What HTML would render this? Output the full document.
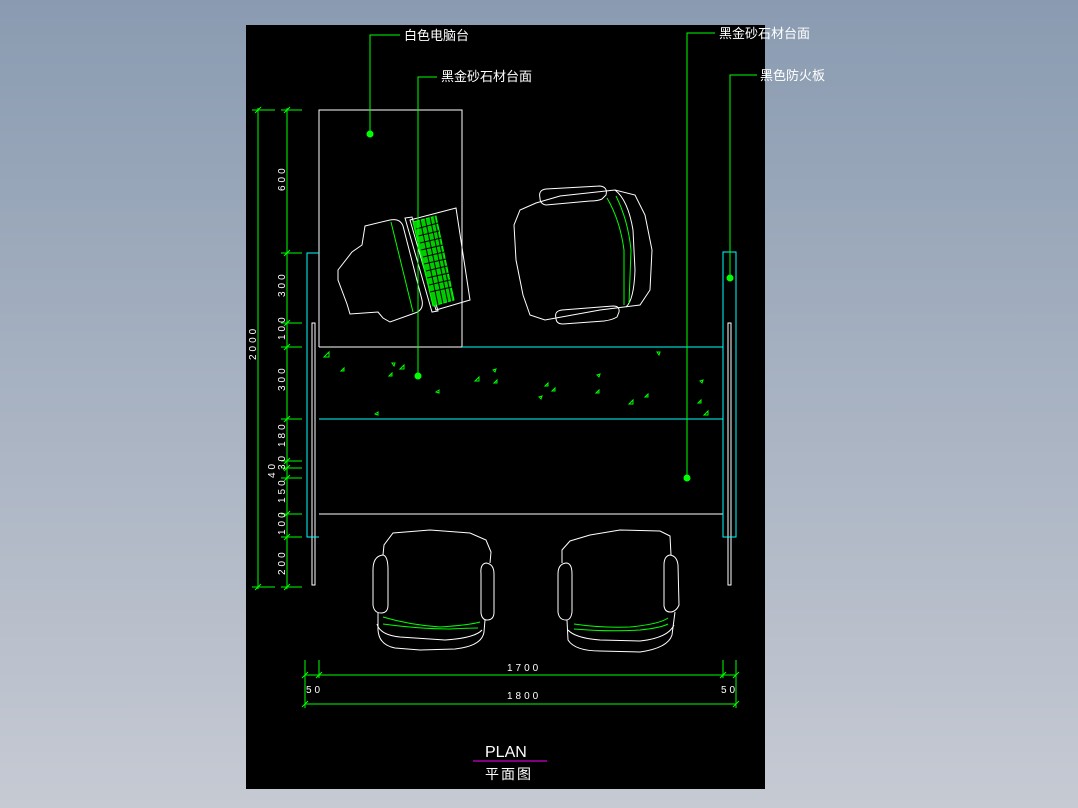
<!DOCTYPE html>
<html><head><meta charset="utf-8"><style>
html,body{margin:0;padding:0;width:1078px;height:808px;overflow:hidden;background:linear-gradient(#8a9bb1,#c6cad3);}
svg{position:absolute;left:0;top:0}
text{font-family:"Liberation Sans","Noto Sans CJK SC",sans-serif;}
</style></head><body>
<svg width="1078" height="808" viewBox="0 0 1078 808">
<rect x="246" y="25" width="519" height="764" fill="#000"/>
<g fill="none" stroke="#fff" stroke-width="1" shape-rendering="crispEdges">
<path d="M319 347V110H462V347"/>
<path d="M319 347H462"/>
<path d="M319 514H723"/>
<rect x="312" y="323" width="3" height="262"/>
<rect x="728" y="323" width="3" height="262"/>
</g>
<g fill="none" stroke="#fff" stroke-width="1">
<!-- monitor -->
<path d="M365 226L390 220Q400 218 403 226L422 300Q424 310 415 313L390 322L383 318L378 312L350 314L347 304L338 280L338 270L352 252L362 245Z"/>
<path d="M405 218L432 312L438 311L412 217Z"/>
<path d="M410 220L456 208L470 300L436 310Z"/>
<!-- top right chair -->
<path d="M536 203L520 210L514 225L516 260L523 295L530 315L545 320L600 310L640 305L650 290L652 250L645 215L635 195L615 190L560 196Z"/>
<path d="M540 198Q538 190 546 189L600 186Q608 187 606 195L602 199Q598 201 590 201L546 205Q540 204 540 198Z"/>
<path d="M556 318Q554 311 562 310L613 306Q620 306 619 312L617 317Q612 320 604 321L563 324Q556 324 556 318Z"/>
<path d="M615 190Q628 200 633 230L635 270Q634 300 626 307"/>
<!-- bottom left chair -->
<path d="M383 555L384 545L393 533L430 530L470 533L486 540L491 552L490 563"/>
<path d="M383 555Q373 556 373 570L373 605Q374 613 381 613Q388 613 388 605L388 570Q388 556 383 555Z"/>
<path d="M486 563Q480 564 481 574L481 613Q482 620 487 620Q494 620 494 612L494 574Q494 564 486 563Z"/>
<path d="M378 613L378 630Q379 645 395 648L420 650L455 649Q482 646 484 632L485 620"/>
<path d="M377 624Q380 635 400 637L445 640Q475 638 482 630"/>
<!-- bottom right chair -->
<path d="M562 563L562 550L570 541L590 535L620 530L660 531L670 536L671 555"/>
<path d="M566 563Q558 564 558 574L558 612Q559 620 566 620Q571 620 572 612L572 574Q572 563 566 563Z"/>
<path d="M670 555Q664 556 664 565L664 606Q665 612 670 612Q676 612 679 605L678 565Q677 556 670 555Z"/>
<path d="M567 620L568 640Q575 651 600 651L640 652Q668 648 672 635L675 612"/>
<path d="M568 630Q575 638 600 640L640 641Q668 638 674 625"/>
</g>
<g fill="none" stroke="#0f0" stroke-width="1">
<path d="M383 617Q410 625 440 627Q470 625 480 622"/>
<path d="M383 624Q420 629 450 629Q470 628 478 628"/>
<path d="M574 624Q600 628 630 627Q660 624 668 618"/>
<path d="M574 629Q610 632 640 630Q660 628 668 624"/>
<path d="M607 198Q620 220 624 250L624 305"/>
<path d="M616 196Q628 220 631 250L629 303"/>
<path d="M391 222L413 312"/>
</g>
<!-- keyboard -->
<polygon points="413,222 436,216 454,300 433,306" fill="#0c0" stroke="#0f0"/>
<g fill="none" stroke="#000" stroke-width="1">
<path d="M416 229L438 223M418 236L439 231M420 243L441 238M421 250L443 245M423 257L444 252M424 264L446 259M426 271L447 266M427 278L449 273M429 285L450 280M430 292L452 287"/>
<path d="M420 219L438 305M425 218L443 304M430 217L448 303M434 216L452 302"/>
</g>
<g fill="none" stroke="#0ff" stroke-width="1" shape-rendering="crispEdges">
<path d="M319 537H307V253H319"/>
<rect x="723" y="252" width="13" height="285"/>
<path d="M462 347H723M319 419H723"/>
</g>
<g fill="none" stroke="#0f0" stroke-width="1" shape-rendering="crispEdges">
<path d="M370 133V35H400"/>
<path d="M418 376V77H437"/>
<path d="M687 478V33H715"/>
<path d="M730 278V75H757"/>
<path d="M258 108V589M287 108V589"/>
<path d="M252 110H275M281 110H302M252 587H275M281 587H302"/>
<path d="M281 253H302M281 323H302M281 347H302M281 419H302M281 461H302M281 468H302M281 478H302M281 514H302M281 537H302"/>
<path d="M305 675H736M305 704H736"/>
<path d="M305 660V708M319 660V678M723 660V678M736 660V708"/>
</g>
<g fill="none" stroke="#0f0" stroke-width="1">
<path d="M255 113L261 107M284 113L290 107M255 590L261 584M284 590L290 584M284 256L290 250M284 326L290 320M284 350L290 344M284 422L290 416M284 464L290 458M284 471L290 465M284 481L290 475M284 517L290 511M284 540L290 534"/>
<path d="M302 678L308 672M316 678L322 672M720 678L726 672M733 678L739 672M302 707L308 701M733 707L739 701"/>
</g>
<g fill="#0f0">
<circle cx="370" cy="134" r="3.5"/><circle cx="418" cy="376" r="3.5"/><circle cx="687" cy="478" r="3.5"/><circle cx="730" cy="278" r="3.5"/>
</g>
<g fill="none" stroke="#0f0" stroke-width="1">
<path d="M324 357L329 352V357Z M341 371l3-3v3z M389 376l3-3v3z M400 369l4-4v4z M392 363l3 0-1 3z M436 392l3-2v3z M475 381l4-4v4z M494 383l3-3v3z M493 370l3-1-1 3z M375 414l3-2v3z M545 386l3-3v3z M552 391l3-3v3z M539 397l3-1-1 3z M597 375l3-1-1 3z M596 393l3-3v3z M629 404l4-4v4z M645 397l3-3v3z M657 352l3 0-1 3z M700 381l3-1-1 3z M698 403l3-3v3z M704 415l4-4v4z"/>
</g>
<path d="M473 761H547" stroke="#f0f" stroke-width="1"/>
<g fill="#fff" font-size="13">
<text x="404" y="40">白色电脑台</text>
<text x="441" y="81">黑金砂石材台面</text>
<text x="719" y="38">黑金砂石材台面</text>
<text x="760" y="80">黑色防火板</text>
</g>
<g fill="#fff" font-size="10" letter-spacing="3">
<text transform="translate(285,191) rotate(-90)">600</text>
<text transform="translate(285,297) rotate(-90)">300</text>
<text transform="translate(285,340) rotate(-90)">100</text>
<text transform="translate(285,391) rotate(-90)">300</text>
<text transform="translate(285,447) rotate(-90)">180</text>
<text transform="translate(285,470) rotate(-90)">30</text>
<text transform="translate(275,478) rotate(-90)">40</text>
<text transform="translate(285,503) rotate(-90)">150</text>
<text transform="translate(285,535) rotate(-90)">100</text>
<text transform="translate(285,575) rotate(-90)">200</text>
<text transform="translate(256,360) rotate(-90)">2000</text>
<text x="507" y="671">1700</text>
<text x="507" y="699">1800</text>
<text x="306" y="693">50</text>
<text x="721" y="693">50</text>
</g>
<text x="485" y="757" fill="#fff" font-size="16">PLAN</text>
<text x="485" y="779" fill="#fff" font-size="14" letter-spacing="2">平面图</text>
</svg>
</body></html>
